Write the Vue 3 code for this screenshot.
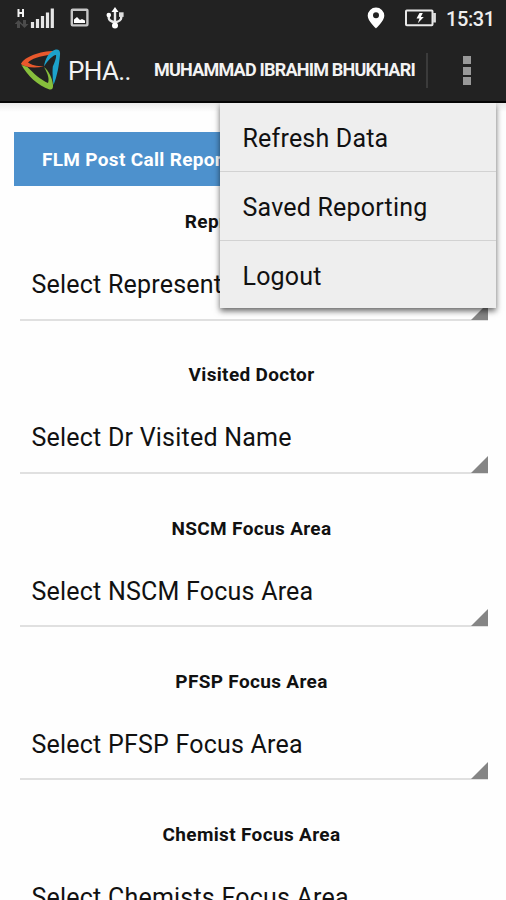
<script setup>
const fields = [
  { label: 'Representative', value: 'Select Representative' },
  { label: 'Visited Doctor', value: 'Select Dr Visited Name' },
  { label: 'NSCM Focus Area', value: 'Select NSCM Focus Area' },
  { label: 'PFSP Focus Area', value: 'Select PFSP Focus Area' },
  { label: 'Chemist Focus Area', value: 'Select Chemists Focus Area' },
]
const menu = ['Refresh Data', 'Saved Reporting', 'Logout']
</script>

<template>
  <div class="screen">
    <div class="status">
      <svg class="signal" width="40" height="24" viewBox="0 0 40 24">
        <path d="M3.500 3v8M8 3v8M3.500 7H8" stroke="#f2f2f2" stroke-width="2" fill="none" />
        <path d="M3.500 14l4 4H5v4H2v-4H-.5zM9.500 22l-4-4H8v-4h3v4h2.500z" fill="#4b4b4b" />
        <path d="M17.500 22v-6M22.500 22v-9M27.500 22V10M32.500 22V6.500M37.300 22V2.500" stroke="#e6e6e6" stroke-width="3.200" />
      </svg>
      <svg class="picture" width="20" height="20" viewBox="0 0 20 20">
        <rect x="1.800" y="1.800" width="15.600" height="15.600" rx=".8" fill="none" stroke="#c6c6c6" stroke-width="2.400" />
        <path d="M4 15v-3.500l3-2.500 3 3 2-1 3 1.500V15z" fill="#fff" />
      </svg>
      <svg class="usb" width="18" height="22" viewBox="0 0 18 22">
        <path d="M9 3v16M2.800 8v3.200Q3 14 9 15.500Q15 14 15.200 11V7.500" fill="none" stroke="#e8e8e8" stroke-width="2.400" />
        <path d="M9 0l3.500 5H5.500z" fill="#fff" />
        <circle cx="2.800" cy="8" r="2.300" fill="#fff" />
        <rect x="13" y="5.300" width="4.600" height="4.600" fill="#ddd" />
        <circle cx="9" cy="18.500" r="3" fill="#fff" />
      </svg>
      <svg class="pin" width="18" height="22" viewBox="0 0 18 22">
        <path fill-rule="evenodd" d="M9 .5a8.300 8.300 0 0 1 8.300 8.300C17.300 14 9 21.500 9 21.500S.7 14 .7 8.800A8.300 8.300 0 0 1 9 .5zM9 5.200a3 3 0 1 0 0 6 3 3 0 0 0 0-6z" fill="#fff" />
      </svg>
      <svg class="battery" width="32" height="18" viewBox="0 0 32 18">
        <rect x="1" y="1.400" width="26.500" height="14.800" rx=".8" fill="none" stroke="#e8e8e8" stroke-width="2" />
        <path d="M29.500 4v9.500" stroke="#ddd" stroke-width="2.800" />
        <path d="M14.500 4L11.500 9.500h3L12.800 14.200 18.800 8H15.800l2-4z" fill="#fff" />
      </svg>
      <span class="clock">15:31</span>
    </div>

    <div class="appbar">
      <svg class="logo" width="42" height="42" viewBox="0 0 42 42">
        <path fill="#e8582c" d="M.8 15C5 7.500 20 1.800 35.500 2L31 5.800C20 7 11 10 8 13.500C11 16 16 17 24 17.500C14 19.500 5 18.500 .8 15z" />
        <path fill="#87bf3c" d="M1.500 16C7 26 18 37 29.500 40.500C32 41 33.300 39.500 33 36C32.500 29 28.500 21.500 24 18C28 25 29.500 30 28 34C21 31 13 24 7.500 18z" />
        <path fill="#1ca2cb" d="M35 .8C38.500 -.2 40.500 1.500 40 6C39.300 15 37 28 33.500 36C32.500 30 32.300 23 32.800 17.500C35.300 12 36.500 8 36 6C32.500 6.500 28 11 24 17.500C25 10 29 3 35 .8z" />
      </svg>
      <span class="title">PHA..</span>
      <span class="user">MUHAMMAD IBRAHIM BHUKHARI</span>
      <span class="divider"></span>
      <div class="more"><i></i><i></i><i></i></div>
    </div>

    <main>
      <div class="banner">FLM Post Call Reporting</div>
      <section v-for="f in fields" :key="f.label" class="field">
        <div class="label">{{ f.label }}</div>
        <div class="select">
          <span>{{ f.value }}</span>
          <svg class="corner" width="17" height="17" viewBox="0 0 17 17"><path d="M17 0v17H0z" fill="#858585" /></svg>
        </div>
      </section>
    </main>

    <div class="menu">
      <div v-for="m in menu" :key="m" class="item"><span>{{ m }}</span></div>
    </div>
  </div>
</template>

<style>
body { margin: 0; background: #fefefe; }
</style>

<style scoped>
.screen { position: relative; width: 506px; height: 900px; overflow: hidden; background: #fefefe; font-family: Roboto, "Liberation Sans", sans-serif; color: #111; }
.screen * { box-sizing: border-box; }
svg { display: block; flex: none; }
.status { display: flex; align-items: flex-start; height: 36px; background: #222; color: #eee; }
.signal { margin: 6px 0 0 15px; }
.picture { margin: 8px 0 0 15px; }
.usb { margin: 7px 0 0 16px; }
.pin { margin: 7px 0 0 243px; }
.battery { margin: 9px 0 0 20px; }
.clock { margin: 7px 0 0 9px; font-size: 20px; line-height: 24px; font-weight: 500; letter-spacing: -.4px; white-space: nowrap; }
.appbar { display: flex; align-items: center; height: 67px; background: #222; border-bottom: 2px solid #050505; color: #f3f3f3; white-space: nowrap; }
.logo { margin: 3px 0 0 20px; }
.title { flex: none; width: 86px; padding-left: 6px; font-size: 26px; line-height: 32px; margin-top: 4px; letter-spacing: -.6px; }
.user { flex: none; width: 278px; padding-left: 6px; margin-top: 3px; font-size: 18px; line-height: 24px; font-weight: 700; letter-spacing: -.78px; }
.divider { flex: none; width: 2px; height: 35px; margin-top: 3px; background: #3b3b3b; }
.more { display: flex; flex: none; flex-direction: column; gap: 2.500px; margin: 4px 0 0 35px; }
.more i { width: 8px; height: 8px; background: #999; }
main { padding-top: 29px; background: linear-gradient(#e9e9e9, #fefefe 9px); }
.banner { width: 276px; height: 54px; margin-left: 14px; padding-left: 28px; line-height: 55px; background: #4d91cd; color: #fff; font-size: 19px; font-weight: 700; letter-spacing: .32px; white-space: nowrap; }
.field { height: 153.300px; padding: 0 18px 0 20px; }
.label { height: 72px; padding-right: 5px; line-height: 72px; text-align: center; font-size: 19px; font-weight: 700; letter-spacing: .34px; }
.select { display: flex; justify-content: space-between; align-items: flex-end; height: 62.500px; border-bottom: 2px solid #e0e0e0; padding-left: 11.500px; }
.select span { align-self: flex-start; font-size: 25px; line-height: 53px; letter-spacing: .22px; white-space: nowrap; }
.corner { margin-bottom: -1px; }
.menu { position: absolute; top: 103px; left: 220px; width: 276px; height: 205px; background: #eee; box-shadow: 0 3px 6px rgba(0, 0, 0, .6); clip-path: inset(0 -14px -14px -14px); }
.item { height: 69px; padding-left: 22.500px; border-bottom: 1px solid #d2d2d2; font-size: 25px; line-height: 71px; letter-spacing: .2px; white-space: nowrap; }
.item:last-child { border-bottom: 0; height: 67px; }
</style>
